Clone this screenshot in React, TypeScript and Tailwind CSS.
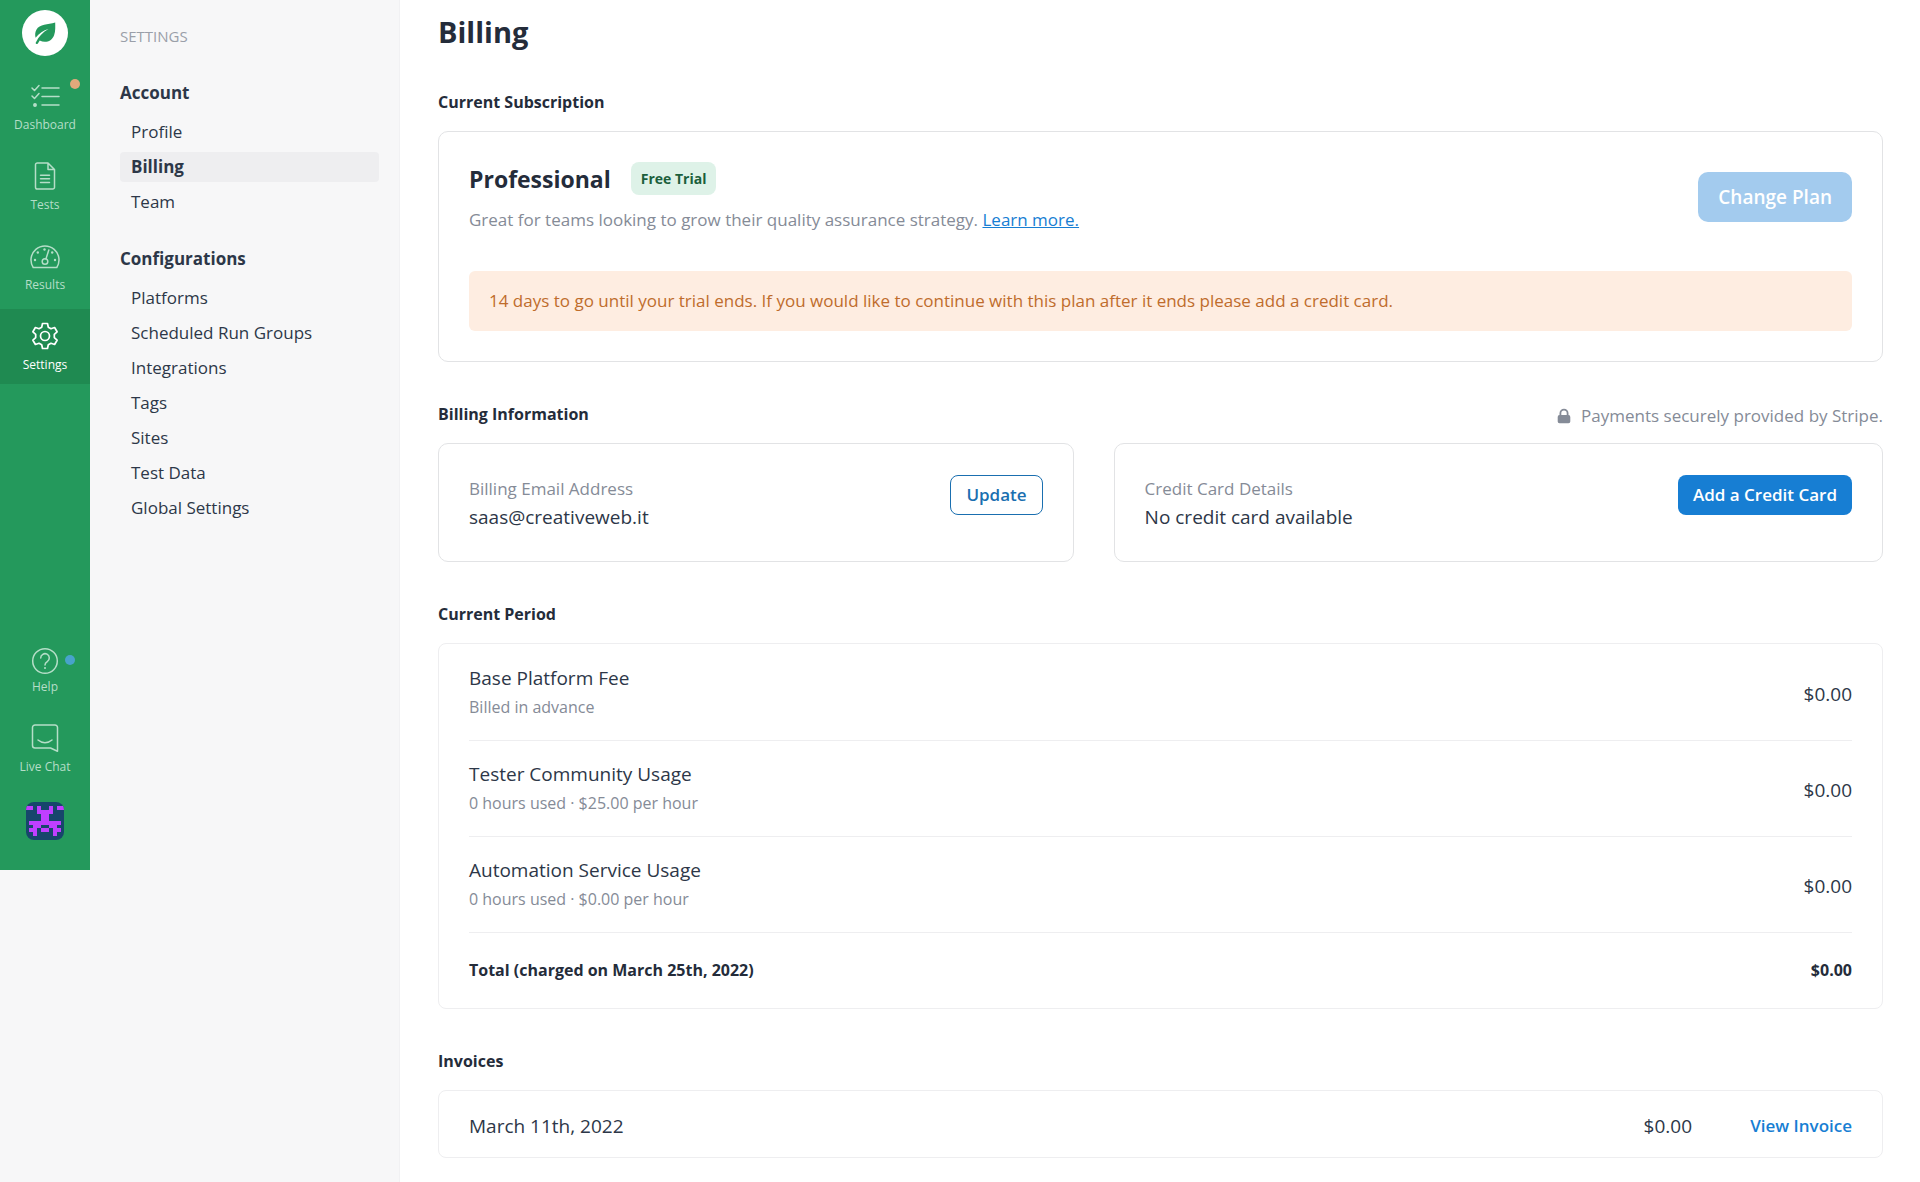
import { HiLockClosed } from "react-icons/hi";

type NavItem = {
  label: string;
  icon: () => React.JSX.Element;
  dot?: string;
  active?: boolean;
};

const ChecklistIcon = () => (
  <svg width="30" height="28" viewBox="0 0 30 28" fill="none" stroke="currentColor" strokeWidth="1.5" strokeLinecap="round" strokeLinejoin="round">
    <path d="M2 6l2.5 2.5L9 3.500M2 14l2.500 2.500L9 11.500M12 6h17M12 14.500h17M12 23h17" />
    <circle cx="5" cy="23" r="1.200" fill="currentColor" />
  </svg>
);

const DocumentIcon = () => (
  <svg width="22" height="28" viewBox="0 0 22 28" fill="none" stroke="currentColor" strokeWidth="1.5" strokeLinecap="round" strokeLinejoin="round">
    <path d="M14 1H3.300a1.800 1.800 0 0 0-1.800 1.800v22.400A1.800 1.800 0 0 0 3.300 27h15.400a1.800 1.800 0 0 0 1.800-1.800V7.500L14 1zM14 1v6.500h6.500M6.500 13.200h9M6.500 16.800h9M6.500 20.400h9" />
  </svg>
);

const GaugeIcon = () => (
  <svg width="30" height="28" viewBox="0 0 30 28" fill="none" stroke="currentColor" strokeWidth="1.5" strokeLinecap="round" strokeLinejoin="round">
    <path d="M3.200 25.500A14 14 0 1 1 26.800 25.500z" />
    <circle cx="15" cy="19.500" r="2.800" />
    <path d="M16 16.800L18.800 8" />
    <g fill="currentColor" stroke="none">
      <circle cx="5" cy="18" r="1.200" />
      <circle cx="7.800" cy="10.500" r="1.200" />
      <circle cx="14.500" cy="7.500" r="1.200" />
      <circle cx="22.200" cy="10.500" r="1.200" />
      <circle cx="25" cy="18" r="1.200" />
    </g>
  </svg>
);

const GearIcon = () => (
  <svg width="28" height="28" viewBox="0 0 28 28" fill="none" stroke="currentColor" strokeWidth="1.7" strokeLinejoin="round">
    <path d="M11.500 1.500h5l.8 3.700 2.700 1.500 3.600-1.200 2.500 4.300-2.800 2.600v3.200l2.800 2.600-2.500 4.300-3.600-1.200-2.700 1.500-.8 3.700h-5l-.8-3.700L8 21.300l-3.600 1.200-2.500-4.300 2.800-2.600v-3.200L1.900 9.800l2.500-4.300L8 6.700l2.700-1.500z" />
    <circle cx="14" cy="14" r="4.500" />
  </svg>
);

const HelpIcon = () => (
  <svg className="overflow-visible" width="28" height="28" viewBox="0 -3 28 28" fill="none" stroke="currentColor" strokeWidth="1.5" strokeLinecap="round" strokeLinejoin="round">
    <circle cx="14" cy="14" r="12.300" />
    <path d="M9.700 11a4.300 4.300 0 1 1 6.600 3.600c-1.400.9-2.300 1.600-2.300 3.400" />
    <circle cx="14" cy="21" r="1" fill="currentColor" stroke="none" />
  </svg>
);

const ChatIcon = () => (
  <svg width="28" height="28" viewBox="0 0 28 28" fill="none" stroke="currentColor" strokeWidth="1.5" strokeLinecap="round" strokeLinejoin="round">
    <path d="M4 1h20a2.500 2.500 0 0 1 2.500 2.500v23.700L19.500 24H4a2.500 2.500 0 0 1-2.500-2.500v-18A2.500 2.500 0 0 1 4 1z" />
    <path d="M7 16c4 3.500 10 3.500 14 0" />
  </svg>
);

const LogoIcon = () => (
  <svg width="46" height="46" viewBox="0 0 46 46" aria-hidden="true">
    <circle cx="23" cy="23" r="23" fill="#fff" />
    <path d="M33.200 12.500c-7.400 2.300-15.500 1.300-18.800 7.200-1.400 2.600-1.500 5.400-.8 8 3.400-4.400 7.900-7.300 12.900-8.700-5.700 3-9.800 7.500-12.800 13.700-.4.900 1.700 1.800 2.200.9l1.800-3.100c5.600 3 12.200.8 14.400-5.300 1.600-4.300 1.100-8.700 1.100-12.700z" fill="#24995c" />
  </svg>
);

const Avatar = () => (
  <svg width="38" height="38" viewBox="0 0 38 38" shapeRendering="crispEdges" role="img" aria-label="Profile picture">
    <path
      d="M0 4h7v4H0zM31 4h7v4h-7zM11 4h4v4h8V4h4v8h-4v7h12v4h-4v3h4v4h-4v4h-4v-8h-4v-3h-8v3h-4v8H7v-4H3v-4h4v-3H3v-4h12v-7h-4zM15 26h8v4h-8z"
      fill="#bf3fff"
    />
  </svg>
);

const mainNav: NavItem[] = [
  { label: "Dashboard", icon: ChecklistIcon, dot: "right-[10px] top-[10px] bg-[#e0a97b]" },
  { label: "Tests", icon: DocumentIcon },
  { label: "Results", icon: GaugeIcon },
  { label: "Settings", icon: GearIcon, active: true },
];

const supportNav: NavItem[] = [
  { label: "Help", icon: HelpIcon, dot: "right-[15px] top-6 bg-[#48a3cb]" },
  { label: "Live Chat", icon: ChatIcon },
];

const settingsMenu = [
  { title: "Account", items: ["Profile", "Billing", "Team"] },
  {
    title: "Configurations",
    items: [
      "Platforms",
      "Scheduled Run Groups",
      "Integrations",
      "Tags",
      "Sites",
      "Test Data",
      "Global Settings",
    ],
  },
];

const fees = [
  { name: "Base Platform Fee", note: "Billed in advance", price: "$0.00" },
  { name: "Tester Community Usage", note: "0 hours used · $25.00 per hour", price: "$0.00" },
  { name: "Automation Service Usage", note: "0 hours used · $0.00 per hour", price: "$0.00" },
];

const NavLink = ({ label, icon: Icon, dot, active }: NavItem) => (
  <a
    href="#"
    className={`relative flex h-[75px] flex-col items-center pt-[13px] ${
      active ? "bg-[#1f8a51] text-white" : "text-[#b5dec8]"
    }`}
  >
    <span className="flex h-7 items-center">
      <Icon />
    </span>
    <span className="mt-[5px] text-[12px] leading-5">{label}</span>
    {dot && <span className={`absolute h-[10px] w-[10px] rounded-full ${dot}`} />}
  </a>
);

const SectionTitle = ({ children }: { children: React.ReactNode }) => (
  <h2 className="text-[16px] font-bold leading-6 text-[#242c3a]">{children}</h2>
);

const App = () => {
  return (
    <div className="flex min-h-screen bg-white font-['Open_Sans','Noto_Sans',sans-serif] text-[#2d3748]">
      <div className="flex w-[400px] shrink-0 items-start border-r border-[#f1f1f3] bg-[#f7f7f8]">
        <nav className="flex h-[870px] w-[90px] shrink-0 flex-col bg-[#24995c] pb-[30px] pt-[10px]">
          <a href="#" aria-label="Home" className="mx-auto mb-[13px]">
            <LogoIcon />
          </a>
          <div className="flex flex-col gap-[5px]">
            {mainNav.map((item) => (
              <NavLink key={item.label} {...item} />
            ))}
          </div>
          <div className="mt-auto flex flex-col gap-[5px]">
            {supportNav.map((item) => (
              <NavLink key={item.label} {...item} />
            ))}
          </div>
          <button type="button" className="mx-auto mt-4 overflow-hidden rounded-lg bg-[#17466b]">
            <Avatar />
          </button>
        </nav>

        <aside className="grow pl-[30px] pr-5 pt-6">
          <div className="text-[15px] font-medium leading-6 text-[#9a9fa9]">SETTINGS</div>
          {settingsMenu.map((group) => (
            <div key={group.title} className="mt-[33px] last:mt-[30px]">
              <h2 className="text-[17px] font-bold leading-6">{group.title}</h2>
              <ul className="mt-3 flex flex-col gap-[5px]">
                {group.items.map((item) => (
                  <li key={item}>
                    <a
                      href="#"
                      className={`block rounded px-[11px] text-[17px] leading-[30px] ${
                        item === "Billing" ? "bg-[#eeeef0] font-bold" : ""
                      }`}
                    >
                      {item}
                    </a>
                  </li>
                ))}
              </ul>
            </div>
          ))}
        </aside>
      </div>

      <main className="grow pb-6 pl-[38px] pr-[37px] pt-3">
        <h1 className="text-[29px] font-bold leading-10 text-[#242c3a]">Billing</h1>

        <section className="mt-[38px]">
          <SectionTitle>Current Subscription</SectionTitle>
          <div className="mt-[17px] rounded-[10px] border border-[#e2e3e5] p-[30px]">
            <div className="flex items-center justify-between">
              <div>
                <div className="flex items-center gap-5">
                  <h3 className="text-[23px] font-bold leading-8 text-[#242c3a]">Professional</h3>
                  <span className="rounded-lg bg-[#def2e8] px-[10px] text-[14px] font-bold leading-[33px] text-[#1c5f3c]">
                    Free Trial
                  </span>
                </div>
                <p className="mt-[13px] text-[17px] leading-6 text-[#858b97]">
                  Great for teams looking to grow their quality assurance strategy.{" "}
                  <a href="#" className="text-[#177ed3] underline">
                    Learn more.
                  </a>
                </p>
              </div>
              <button type="button" disabled className="h-[50px] rounded-[10px] bg-[#a3cbee] px-5 text-[19px] font-semibold text-white">
                Change Plan
              </button>
            </div>
            <div className="mt-[39px] rounded-md bg-[#feede1] px-5 py-[18px] text-[17px] leading-6 text-[#bf6c2c]">
              14 days to go until your trial ends. If you would like to continue with this plan after it ends please add a credit card.
            </div>
          </div>
        </section>

        <section className="mt-10">
          <div className="flex items-start justify-between">
            <SectionTitle>Billing Information</SectionTitle>
            <div className="flex items-center gap-2 text-[17px] leading-7 text-[#858b97]">
              <HiLockClosed className="h-[18px] w-[18px]" />
              Payments securely provided by Stripe.
            </div>
          </div>
          <div className="mt-[13px] grid grid-cols-[19fr_23fr] gap-10">
            <div className="flex h-[119px] items-start justify-between rounded-[10px] border border-[#e2e3e5] px-[30px] pt-[31px]">
              <div>
                <div className="text-[17px] leading-7 text-[#858b97]">Billing Email Address</div>
                <div className="text-[19px] leading-7">saas@creativeweb.it</div>
              </div>
              <button type="button" className="h-10 rounded-lg border border-[#1a6fb0] px-[15px] text-[17px] font-semibold text-[#1a6fb0]">
                Update
              </button>
            </div>
            <div className="flex h-[119px] items-start justify-between rounded-[10px] border border-[#e2e3e5] px-[30px] pt-[31px]">
              <div>
                <div className="text-[17px] leading-7 text-[#858b97]">Credit Card Details</div>
                <div className="text-[19px] leading-7">No credit card available</div>
              </div>
              <button type="button" className="h-10 rounded-lg bg-[#177ed3] px-[15px] text-[17px] font-semibold text-white">
                Add a Credit Card
              </button>
            </div>
          </div>
        </section>

        <section className="mt-10">
          <SectionTitle>Current Period</SectionTitle>
          <div className="mt-[17px] rounded-lg border border-[#eeeef0] px-[30px]">
            <table className="w-full">
              <tbody>
                {fees.map((fee) => (
                  <tr key={fee.name} className="h-24 border-b border-[#eeeef0]">
                    <td>
                      <div className="text-[19px] leading-[30px]">{fee.name}</div>
                      <div className="text-[16px] leading-7 text-[#858b97]">{fee.note}</div>
                    </td>
                    <td className="pt-1 text-right text-[19px]">{fee.price}</td>
                  </tr>
                ))}
                <tr className="h-[76px] text-[16px] font-bold text-[#242c3a]">
                  <td>Total (charged on March 25th, 2022)</td>
                  <td className="text-right">$0.00</td>
                </tr>
              </tbody>
            </table>
          </div>
        </section>

        <section className="mt-10">
          <SectionTitle>Invoices</SectionTitle>
          <div className="mt-[17px] rounded-lg border border-[#eeeef0] px-[30px]">
            <table className="w-full">
              <tbody>
                <tr className="h-[66px] text-[19px]">
                  <td className="pt-1">March 11th, 2022</td>
                  <td className="pt-1 text-right">$0.00</td>
                  <td className="w-40 pt-1 text-right text-[17px] font-semibold text-[#177ed3]">
                    <a href="#">View Invoice</a>
                  </td>
                </tr>
              </tbody>
            </table>
          </div>
        </section>
      </main>
    </div>
  );
};

export default App;
